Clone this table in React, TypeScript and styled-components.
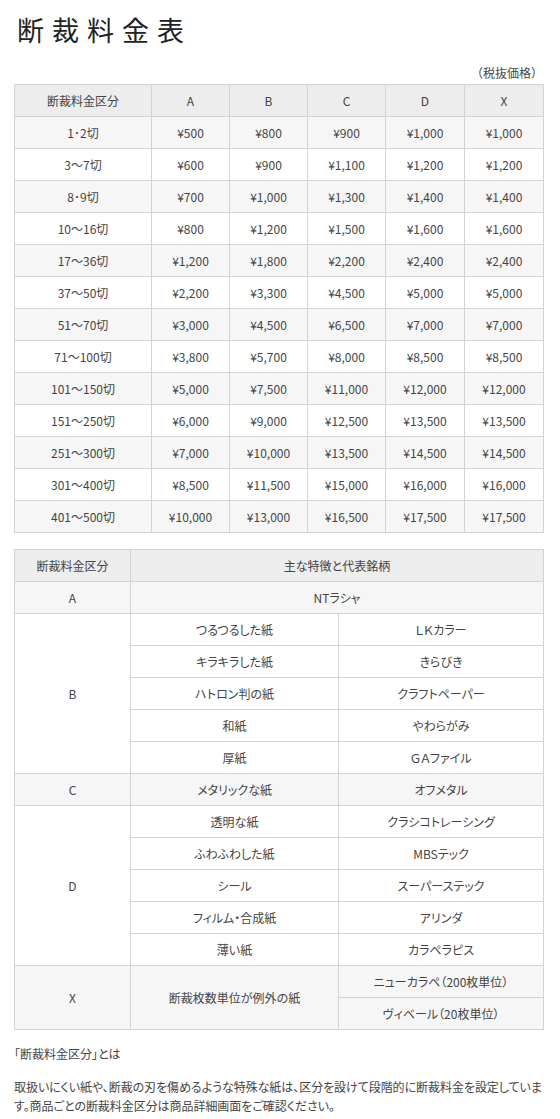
import React from "react";
import styled, { createGlobalStyle } from "styled-components";

const Global = createGlobalStyle`
  html, body { margin: 0; padding: 0; background: #fff; }
  body { font-family: "Noto Sans CJK JP", "Noto Sans", sans-serif; color: #444; }
`;

const Page = styled.div`
  width: 529px;
  padding: 14px 0 6px 14px;
`;

const Title = styled.h1`
  margin: 0 0 0 3px;
  font-family: "Noto Sans CJK JP", serif;
  font-weight: 400;
  font-size: 27px;
  line-height: 32px;
  letter-spacing: 8px;
  color: #222;
`;

const Note = styled.div`
  margin-top: 19px;
  text-align: right;
  font-size: 12px;
  line-height: 16px;
  color: #444;
`;

const Table = styled.table<{ $mt: number }>`
  width: 529px;
  margin-top: ${(p) => p.$mt}px;
  border-collapse: collapse;
  table-layout: fixed;
  font-size: 12px;
  color: #444;
  font-feature-settings: "palt";
`;

const Row = styled.tr<{ $shade: "head" | "gray" | "white" }>`
  background: ${(p) =>
    p.$shade === "head" ? "#ededed" : p.$shade === "gray" ? "#f6f6f6" : "#ffffff"};
`;

const Cell = styled.td`
  border: 1px solid #d3d3d3;
  height: 31px;
  padding: 0;
  text-align: center;
  vertical-align: middle;
  line-height: 16px;
  white-space: nowrap;
`;

const Heading = styled.div`
  margin-top: 14px;
  font-size: 12px;
  line-height: 20px;
  color: #444;
  font-feature-settings: "palt";
`;

const Para = styled.p`
  margin: 13px 0 0;
  font-size: 12px;
  line-height: 19px;
  color: #444;
  letter-spacing: -0.05px;
  font-feature-settings: "palt";
`;

const prices: [string, number[]][] = [
  ["1･2切", [500, 800, 900, 1000, 1000]],
  ["3～7切", [600, 900, 1100, 1200, 1200]],
  ["8･9切", [700, 1000, 1300, 1400, 1400]],
  ["10～16切", [800, 1200, 1500, 1600, 1600]],
  ["17～36切", [1200, 1800, 2200, 2400, 2400]],
  ["37～50切", [2200, 3300, 4500, 5000, 5000]],
  ["51～70切", [3000, 4500, 6500, 7000, 7000]],
  ["71～100切", [3800, 5700, 8000, 8500, 8500]],
  ["101～150切", [5000, 7500, 11000, 12000, 12000]],
  ["151～250切", [6000, 9000, 12500, 13500, 13500]],
  ["251～300切", [7000, 10000, 13500, 14500, 14500]],
  ["301～400切", [8500, 11500, 15000, 16000, 16000]],
  ["401～500切", [10000, 13000, 16500, 17500, 17500]],
];

const yen = (n: number) => "¥" + n.toLocaleString("en-US");

const groupB: [string, string][] = [
  ["つるつるした紙", "ＬＫカラー"],
  ["キラキラした紙", "きらびき"],
  ["ハトロン判の紙", "クラフトペーパー"],
  ["和紙", "やわらがみ"],
  ["厚紙", "ＧＡファイル"],
];

const groupD: [string, string][] = [
  ["透明な紙", "クラシコトレーシング"],
  ["ふわふわした紙", "MBSテック"],
  ["シール", "スーパーステック"],
  ["フィルム・合成紙", "アリンダ"],
  ["薄い紙", "カラペラピス"],
];

export default function App() {
  return (
    <>
      <Global />
      <Page>
        <Title>断裁料金表</Title>
        <Note>（税抜価格）</Note>
        <Table $mt={3}>
          <colgroup>
            <col style={{ width: 137 }} />
            <col style={{ width: 78 }} />
            <col style={{ width: 78 }} />
            <col style={{ width: 78 }} />
            <col style={{ width: 79 }} />
            <col style={{ width: 79 }} />
          </colgroup>
          <tbody>
            <Row $shade="head">
              <Cell>断裁料金区分</Cell>
              <Cell>A</Cell>
              <Cell>B</Cell>
              <Cell>C</Cell>
              <Cell>D</Cell>
              <Cell>X</Cell>
            </Row>
            {prices.map(([label, vals], i) => (
              <Row key={label} $shade={i % 2 === 0 ? "gray" : "white"}>
                <Cell>{label}</Cell>
                {vals.map((v, j) => (
                  <Cell key={j}>{yen(v)}</Cell>
                ))}
              </Row>
            ))}
          </tbody>
        </Table>

        <Table $mt={16}>
          <colgroup>
            <col style={{ width: 116 }} />
            <col style={{ width: 208 }} />
            <col style={{ width: 205 }} />
          </colgroup>
          <tbody>
            <Row $shade="head">
              <Cell>断裁料金区分</Cell>
              <Cell colSpan={2}>主な特徴と代表銘柄</Cell>
            </Row>
            <Row $shade="gray">
              <Cell>A</Cell>
              <Cell colSpan={2}>NTラシャ</Cell>
            </Row>
            {groupB.map(([a, b], i) => (
              <Row key={a} $shade="white">
                {i === 0 && <Cell rowSpan={5}>B</Cell>}
                <Cell>{a}</Cell>
                <Cell>{b}</Cell>
              </Row>
            ))}
            <Row $shade="gray">
              <Cell>C</Cell>
              <Cell>メタリックな紙</Cell>
              <Cell>オフメタル</Cell>
            </Row>
            {groupD.map(([a, b], i) => (
              <Row key={a} $shade="white">
                {i === 0 && <Cell rowSpan={5}>D</Cell>}
                <Cell>{a}</Cell>
                <Cell>{b}</Cell>
              </Row>
            ))}
            <Row $shade="gray">
              <Cell rowSpan={2}>X</Cell>
              <Cell rowSpan={2}>断裁枚数単位が例外の紙</Cell>
              <Cell>ニューカラペ（200枚単位）</Cell>
            </Row>
            <Row $shade="gray">
              <Cell>ヴィベール（20枚単位）</Cell>
            </Row>
          </tbody>
        </Table>

        <Heading>「断裁料金区分」とは</Heading>
        <Para>
          取扱いにくい紙や、断裁の刃を傷めるような特殊な紙は、区分を設けて段階的に断裁料金を設定しています。商品ごとの断裁料金区分は商品詳細画面をご確認ください。
        </Para>
      </Page>
    </>
  );
}
